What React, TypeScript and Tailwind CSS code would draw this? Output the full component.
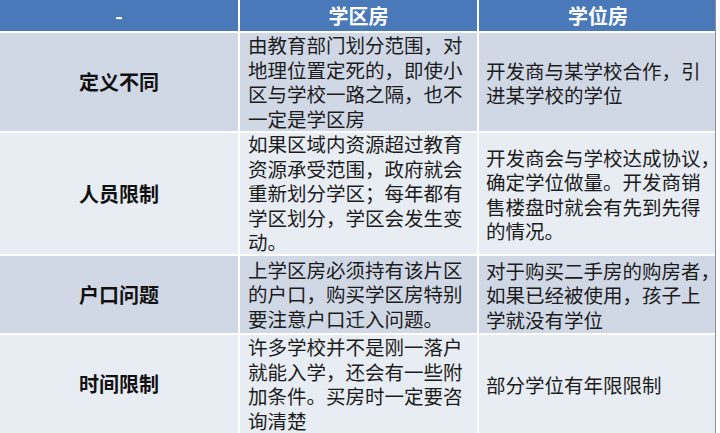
import React from "react";

type Row = {
  label: string;
  tone: "dark" | "light";
  height: string;
  district: string[];
  seat: string[];
};

const rows: Row[] = [
  {
    label: "定义不同",
    tone: "dark",
    height: "h-[98px]",
    district: ["由教育部门划分范围，对", "地理位置定死的，即使小", "区与学校一路之隔，也不", "一定是学区房"],
    seat: ["开发商与某学校合作，引", "进某学校的学位"],
  },
  {
    label: "人员限制",
    tone: "light",
    height: "h-[121px]",
    district: ["如果区域内资源超过教育", "资源承受范围，政府就会", "重新划分学区；每年都有", "学区划分，学区会发生变", "动。"],
    seat: ["开发商会与学校达成协议，", "确定学位做量。开发商销", "售楼盘时就会有先到先得", "的情况。"],
  },
  {
    label: "户口问题",
    tone: "dark",
    height: "h-[77px]",
    district: ["上学区房必须持有该片区", "的户口，购买学区房特别", "要注意户口迁入问题。"],
    seat: ["对于购买二手房的购房者，", "如果已经被使用，孩子上", "学就没有学位"],
  },
  {
    label: "时间限制",
    tone: "light",
    height: "h-[98px]",
    district: ["许多学校并不是刚一落户", "就能入学，还会有一些附", "加条件。买房时一定要咨", "询清楚"],
    seat: ["部分学位有年限限制"],
  },
];

const Lines = ({ lines }: { lines: string[] }) => (
  <div className="whitespace-nowrap">
    {lines.map((l, i) => (
      <div key={i}>{l}</div>
    ))}
  </div>
);

export default function App() {
  return (
    <div
      className="flex h-[433px] w-[720px] overflow-hidden bg-white text-[#1c1c1c]"
      style={{ fontFamily: '"Noto Sans CJK SC", "Noto Sans", sans-serif' }}
    >
      <div className="grid w-[715px] grid-cols-[238px_237px_238px] gap-[2px] bg-white">
        {/* Header */}
        <div className="flex h-[31px] items-center justify-center bg-[#4a79b9] text-[20px] font-bold text-white">
          -
        </div>
        <div className="flex h-[31px] items-center justify-center bg-[#4a79b9] text-[20px] font-bold text-white">
          学区房
        </div>
        <div className="flex h-[31px] items-center justify-center bg-[#4a79b9] text-[20px] font-bold text-white">
          学位房
        </div>

        {rows.map((r) => {
          const bg = r.tone === "dark" ? "bg-[#d0d8e6]" : "bg-[#e8ecf3]";
          return (
            <React.Fragment key={r.label}>
              <div className={`flex ${r.height} items-center justify-center ${bg} text-[20px] font-bold text-[#111]`}>
                {r.label}
              </div>
              <div className={`flex ${r.height} items-center ${bg} pl-[8px] text-[19.5px] leading-[24.5px]`}>
                <Lines lines={r.district} />
              </div>
              <div className={`flex ${r.height} items-center ${bg} pl-[7px] pt-[2px] text-[19.5px] leading-[24.5px]`}>
                <Lines lines={r.seat} />
              </div>
            </React.Fragment>
          );
        })}
      </div>
      <div className="h-full w-[5px] border-l border-[#8a8f99] bg-white" />
    </div>
  );
}
